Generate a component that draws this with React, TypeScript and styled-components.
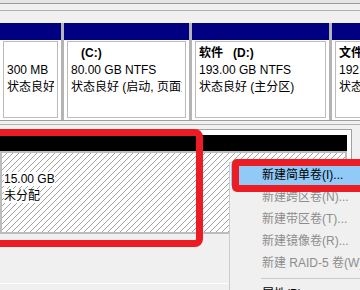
import styled, { createGlobalStyle } from "styled-components";

const GlobalStyle = createGlobalStyle`
  html, body {
    margin: 0;
    padding: 0;
    background: #f0f0f0;
  }
  body {
    font-family: "Liberation Sans", "Noto Sans CJK SC", sans-serif;
    font-size: 12px;
    color: #000;
  }
`;

type Partition = {
  name?: string;
  letter?: string;
  size: string;
  status: string;
  width: number;
};

const partitions: Partition[] = [
  { size: "300 MB", status: "状态良好", width: 61 },
  {
    letter: "(C:)",
    size: "80.00 GB NTFS",
    status: "状态良好 (启动, 页面文件, 故障转储, 主分区)",
    width: 125,
  },
  {
    name: "软件",
    letter: "(D:)",
    size: "193.00 GB NTFS",
    status: "状态良好 (主分区)",
    width: 137,
  },
  {
    name: "文件",
    letter: "(E:)",
    size: "192.00 GB NTFS",
    status: "状态良好 (主分区)",
    width: 137,
  },
];

const menuItems = [
  { label: "新建简单卷(I)...", active: true },
  { label: "新建跨区卷(N)...", disabled: true },
  { label: "新建带区卷(T)...", disabled: true },
  { label: "新建镜像卷(R)...", disabled: true },
  { label: "新建 RAID-5 卷(W)...", disabled: true },
];

const App = () => {
  return (
    <Screen>
      <GlobalStyle />
      <Band $h={3} $bg="#e5e5e5" $line="#9c9c9c" />
      <Band $h={6} $bg="#f0f0f0" $line="#b0b0b0" />
      <Band $h={12} $bg="#f0f0f0" />

      <DiskRow>
        {partitions.map((p, i) => (
          <Column key={i} $width={p.width}>
            <ColumnHeader $color="#000080" />
            <VolumeBox>
              <Line>
                {p.name && <Label>{p.name}</Label>}
                {p.letter ? <Letter>{p.letter}</Letter> : "\u00a0"}
              </Line>
              <Line>{p.size}</Line>
              <Line>{p.status}</Line>
            </VolumeBox>
          </Column>
        ))}
      </DiskRow>

      <RowDivider />

      <LowerDisk>
        <ColumnHeader $color="#000" />
        <Unallocated>
          <Line>&nbsp;</Line>
          <Line>
            <TextBg>15.00 GB</TextBg>
          </Line>
          <Line>
            <TextBg>未分配</TextBg>
          </Line>
        </Unallocated>
      </LowerDisk>

      <BottomLine />

      <Menu>
        {menuItems.map((m) => (
          <MenuItem key={m.label} $active={m.active} $disabled={m.disabled}>
            {m.label}
          </MenuItem>
        ))}
        <MenuSeparator />
        <MenuItem>属性(P)</MenuItem>
      </Menu>

      <Marker $left={-20} $top={129} $width={223} $height={118} $radius={8} />
      <Marker $left={232} $top={159} $width={150} $height={33} $radius={5} />
    </Screen>
  );
};

const Screen = styled.div`
  position: relative;
  width: 360px;
  height: 290px;
  overflow: hidden;
  background: #f0f0f0;
`;

const Band = styled.div<{ $h: number; $bg: string; $line?: string }>`
  height: ${(p) => p.$h}px;
  background: ${(p) => p.$bg};
  border-bottom: ${(p) => (p.$line ? `1px solid ${p.$line}` : "none")};
`;

const DiskRow = styled.div`
  display: flex;
  gap: 3px;
  height: 97px;
  background: #b4b4b4;
  border-bottom: 1px solid #a0a0a0;
`;

const Column = styled.div<{ $width: number }>`
  width: ${(p) => p.$width}px;
  flex: none;
  display: flex;
  flex-direction: column;
  background: #fff;
  overflow: hidden;
`;

const ColumnHeader = styled.div<{ $color: string }>`
  height: 16px;
  flex: none;
  background: ${(p) => p.$color};
  ${Column} & {
    height: 17px;
  }
`;

const VolumeBox = styled.div`
  flex: 1;
  margin: 1px 3px 2px;
  padding: 3px 3px 0;
  border: 1px solid #bcbcbc;
  overflow: hidden;
`;

const Line = styled.div`
  height: 17px;
  line-height: 17px;
  white-space: nowrap;
  overflow: hidden;
`;

const Label = styled.span`
  font-weight: 700;
`;

const Letter = styled(Label)`
  margin-left: 10px;
`;

const RowDivider = styled.div`
  margin-top: 3px;
  height: 1px;
  background: #b4b4b4;
`;

const LowerDisk = styled.div`
  margin-top: 4px;
  width: 352px;
  box-sizing: border-box;
  padding: 5px 4px 0 0;
  background: #fff;
  border-top: 1px solid #a0a0a0;
  border-right: 1px solid #a0a0a0;
`;

const Unallocated = styled.div`
  height: 83px;
  box-sizing: border-box;
  padding: 1px 2px 0;
  border: 2px solid #bdbdbd;
  background: repeating-linear-gradient(
    135deg,
    #fff 0,
    #fff 3.3px,
    #a2a2a2 3.3px,
    #a2a2a2 4.24px
  );
`;

const TextBg = styled.span`
  background: #fff;
`;

const BottomLine = styled.div`
  margin-top: 49px;
  height: 1px;
  background: #fff;
`;

const Menu = styled.div`
  position: absolute;
  left: 229px;
  top: 162px;
  width: 150px;
  height: 150px;
  padding-top: 1px;
  background: #f0f0f0;
  border: 1px solid #cccccc;
`;

const MenuItem = styled.div<{ $active?: boolean; $disabled?: boolean }>`
  height: 22px;
  line-height: 22px;
  margin: 0 1px;
  padding-left: 31px;
  white-space: nowrap;
  color: ${(p) => (p.$disabled ? "#8d8d8d" : "#000")};
  background: ${(p) => (p.$active ? "#91c9f7" : "transparent")};
`;

const MenuSeparator = styled.div`
  height: 1px;
  margin: 4px 0 4px 31px;
  background: #cacaca;
`;

const Marker = styled.div<{
  $left: number;
  $top: number;
  $width: number;
  $height: number;
  $radius: number;
}>`
  position: absolute;
  left: ${(p) => p.$left}px;
  top: ${(p) => p.$top}px;
  width: ${(p) => p.$width}px;
  height: ${(p) => p.$height}px;
  box-sizing: border-box;
  border: 7px solid #ec1c24;
  border-radius: ${(p) => p.$radius}px;
  pointer-events: none;
`;

export default App;
